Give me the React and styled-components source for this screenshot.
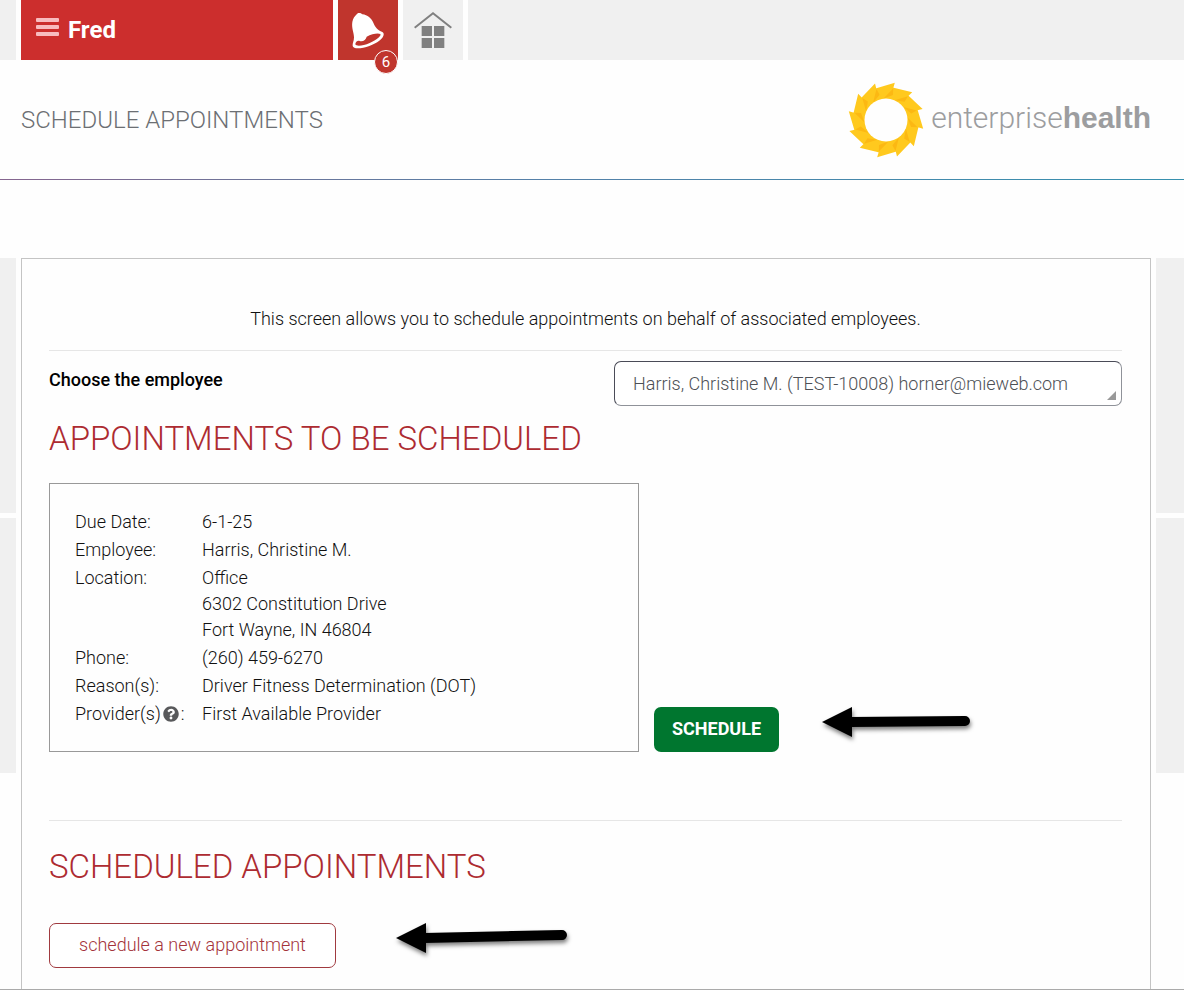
import React, { useState } from "react";
import styled, { createGlobalStyle } from "styled-components";
import { FaQuestionCircle } from "react-icons/fa";

const GlobalStyle = createGlobalStyle`
  * {
    box-sizing: border-box;
  }
  body {
    margin: 0;
    background: #fefefe;
    color: #111;
    font-family: Roboto, "Open Sans", sans-serif;
    font-size: 18px;
    font-weight: 300;
    line-height: 26px;
  }
`;

const Page = styled.div`
  display: flex;
  flex-direction: column;
  min-height: 100vh;
  border-bottom: 1px solid #aaa;
`;

const TopBar = styled.nav`
  display: flex;
  gap: 5px;
  height: 60px;
`;

const BarFill = styled.div`
  background: #f0f0f0;
  flex: ${({ $width }) => ($width ? `0 0 ${$width}` : "1")};
`;

const MenuButton = styled.button`
  display: flex;
  align-items: center;
  gap: 9px;
  flex: 0 1 312px;
  padding: 0 15px;
  border: 0;
  background: #cc2e2d;
  color: #fff;
  font-family: inherit;
  font-size: 24px;
  font-weight: 700;
  cursor: pointer;
`;

const MenuLines = styled.span`
  display: flex;
  flex-direction: column;
  gap: 3px;
  width: 23px;
  margin-bottom: 6px;

  i {
    height: 4px;
    border-radius: 1px;
    background: #f8bcbf;
  }
`;

const IconLink = styled.a`
  position: relative;
  flex: 0 0 60px;
  background: ${({ $active }) => ($active ? "#c0352d" : "#f0f0f0")};

  svg {
    display: block;
  }
`;

const Badge = styled.span`
  position: absolute;
  right: 0;
  bottom: -14px;
  width: 24px;
  height: 24px;
  border: 1px solid #fff;
  border-radius: 50%;
  background: #c0352d;
  color: #fff;
  font-size: 15px;
  font-weight: 400;
  line-height: 23px;
  text-align: center;
`;

const TitleBar = styled.header`
  display: flex;
  align-items: center;
  justify-content: space-between;
  height: 119px;
  padding: 0 33px 0 21px;
`;

const PageTitle = styled.h1`
  margin: 0;
  color: #6c6f73;
  font-size: 24px;
  font-weight: 300;
`;

const Logo = styled.a`
  display: flex;
  align-items: center;
  gap: 7px;
  color: #9c9d9f;
  font-size: 30px;
  text-decoration: none;

  span {
    margin-bottom: 4px;
  }
  b {
    font-family: "Liberation Sans", Arial, sans-serif;
    font-weight: 700;
  }
`;

const Rule = styled.div`
  height: 1px;
  background: linear-gradient(to right, #86658f, #6f7398 20%, #5580a8 45%, #3690ae);
`;

const Body = styled.div`
  display: flex;
  flex: 1;
  gap: 5px;
  margin-top: 78px;
`;

const Gutter = styled.div`
  display: flex;
  flex-direction: column;
  gap: 5px;
  flex: 0 0 ${({ $width }) => $width};

  div {
    height: 255px;
    background: #f0f0f0;
  }
`;

const Panel = styled.main`
  flex: 1;
  min-width: 0;
  padding: 47px 28px 21px 27px;
  border: 1px solid #c4c4c4;
  border-bottom: 0;
`;

const Intro = styled.p`
  margin: 0 0 18px;
  text-align: center;
`;

const Divider = styled.hr`
  height: 1px;
  margin: ${({ $top }) => $top || 0} 0 0;
  border: 0;
  background: #e6e6e6;
`;

const EmployeeRow = styled.div`
  display: flex;
  justify-content: space-between;
  gap: 20px;
  margin-top: 10px;
`;

const Label = styled.label`
  padding-top: 6px;
  color: #000;
  font-weight: 500;
`;

const SelectWrap = styled.div`
  position: relative;
  flex: 0 1 508px;

  svg {
    position: absolute;
    right: 6px;
    bottom: 6px;
    pointer-events: none;
  }
`;

const Select = styled.select`
  appearance: none;
  display: block;
  width: 100%;
  height: 45px;
  padding: 0 18px;
  border: 1px solid;
  border-color: #4a4b57 #8f9299 #8f9299 #4a4b57;
  border-radius: 7px;
  background: #fff;
  color: #4d5055;
  font: inherit;
`;

const SectionTitle = styled.h2`
  margin: ${({ $margin }) => $margin};
  color: #ad2b31;
  font-size: 33px;
  font-weight: 300;
  line-height: 44px;
`;

const Row = styled.div`
  display: flex;
  align-items: flex-end;
`;

const Card = styled.section`
  flex: 0 1 590px;
  padding: 25px 25px 24px;
  border: 1px solid #999;
`;

const Details = styled.dl`
  display: grid;
  grid-template-columns: 127px 1fr;
  row-gap: 2px;
  margin: 0;

  dd {
    margin: 0;
  }
`;

const HelpIcon = styled(FaQuestionCircle)`
  width: 16px;
  height: 16px;
  margin: 0 2px;
  color: #58595b;
  vertical-align: -2px;
`;

const Button = styled.button`
  height: 45px;
  padding: 0 15px 2px;
  border-radius: 7px;
  font: inherit;
  cursor: pointer;
`;

const PrimaryButton = styled(Button)`
  width: 125px;
  margin-left: 15px;
  border: 0;
  background: #00762f;
  color: #fff;
  font-weight: 700;
`;

const OutlineButton = styled(Button)`
  width: 287px;
  border: 1px solid #a03a3f;
  background: #fff;
  color: #a4333a;
`;

const ArrowSvg = styled.svg`
  margin-left: ${({ $space }) => $space};
  overflow: visible;
  filter: drop-shadow(1px 3px 2px rgba(0, 0, 0, 0.5));
`;

const BellIcon = () => (
  <svg width="60" height="60" viewBox="24 0 180 180" aria-hidden="true">
    <path
      fill="#fff"
      d="M79 44C82 38 91 37 97 43C113 45 124 55 130 68C136 82 143 90 157 96C163 99 162 107 157 113C148 125 125 137 100 143C84 146 70 146 68 138C67 130 72 124 72 112C72 98 64 84 67 66C69 54 74 48 79 44Z"
    />
    <path
      fill="#c0352d"
      d="M76 133C76 127 82 121 89 123C99 126 108 119 110 110C126 101 145 98 151 102C155 107 140 120 119 129C100 137 80 141 76 133Z"
    />
  </svg>
);

const HomeIcon = () => (
  <svg width="60" height="60" viewBox="219 0 180 180" aria-hidden="true">
    <path d="M254 83L309 40L364 83" fill="none" stroke="#808080" strokeWidth="6" />
    <path
      fill="#808080"
      d="M275 78h31v30h-31zM312 78h31v30h-31zM275 114h31v30h-31zM312 114h31v30h-31z"
    />
  </svg>
);

const blades = Array.from({ length: 12 }, (_, i) => i * 30);

const SunLogo = () => (
  <svg width="76" height="76" viewBox="-38 -38 76 76" aria-hidden="true">
    {blades.map((angle) => (
      <path
        key={angle}
        transform={`rotate(${angle})`}
        fill="#ffc91e"
        d="M-10.5 -31.5L8.8 -37.2L7 -31L8 -20L-8 -20Z"
      />
    ))}
    {blades.map((angle) => (
      <path
        key={angle}
        transform={`rotate(${angle})`}
        fill="#fcb813"
        d="M7.2 -31.5L-2.5 -21.5L7 -25Z"
      />
    ))}
    <circle r="21.5" fill="#fefefe" />
  </svg>
);

const Arrow = ({ space, length, rise }) => (
  <ArrowSvg $space={space} width={length} height="45" aria-hidden="true">
    <path d="M0 15L30 0V30Z" />
    <path
      d={`M28 15L${length - 5} ${15 - rise}`}
      stroke="#000"
      strokeWidth="10"
      strokeLinecap="round"
    />
  </ArrowSvg>
);

const employees = ["Harris, Christine M. (TEST-10008) horner@mieweb.com"];

const details = [
  ["Due Date:", ["6-1-25"]],
  ["Employee:", ["Harris, Christine M."]],
  ["Location:", ["Office", "6302 Constitution Drive", "Fort Wayne, IN 46804"]],
  ["Phone:", ["(260) 459-6270"]],
  ["Reason(s):", ["Driver Fitness Determination (DOT)"]],
  [<>Provider(s)<HelpIcon />:</>, ["First Available Provider"]],
];

const App = () => {
  const [employee, setEmployee] = useState(employees[0]);

  return (
    <Page>
      <GlobalStyle />
      <TopBar>
        <BarFill $width="16px" />
        <MenuButton>
          <MenuLines>
            <i />
            <i />
            <i />
          </MenuLines>
          Fred
        </MenuButton>
        <IconLink href="#notifications" $active>
          <BellIcon />
          <Badge>6</Badge>
        </IconLink>
        <IconLink href="#home">
          <HomeIcon />
        </IconLink>
        <BarFill />
      </TopBar>
      <TitleBar>
        <PageTitle>SCHEDULE APPOINTMENTS</PageTitle>
        <Logo href="#home">
          <SunLogo />
          <span>
            enterprise<b>health</b>
          </span>
        </Logo>
      </TitleBar>
      <Rule />
      <Body>
        <Gutter $width="16px">
          <div />
          <div />
        </Gutter>
        <Panel>
          <Intro>
            This screen allows you to schedule appointments on behalf of associated employees.
          </Intro>
          <Divider />
          <EmployeeRow>
            <Label htmlFor="employee">Choose the employee</Label>
            <SelectWrap>
              <Select
                id="employee"
                value={employee}
                onChange={(event) => setEmployee(event.target.value)}
              >
                {employees.map((name) => (
                  <option key={name}>{name}</option>
                ))}
              </Select>
              <svg width="9" height="9" aria-hidden="true">
                <path d="M9 0V9H0Z" fill="#999" />
              </svg>
            </SelectWrap>
          </EmployeeRow>
          <SectionTitle $margin="11px 0 22px">APPOINTMENTS TO BE SCHEDULED</SectionTitle>
          <Row>
            <Card>
              <Details>
                {details.map(([term, lines], index) => (
                  <React.Fragment key={index}>
                    <dt>{term}</dt>
                    <dd>
                      {lines.map((line) => (
                        <div key={line}>{line}</div>
                      ))}
                    </dd>
                  </React.Fragment>
                ))}
              </Details>
            </Card>
            <PrimaryButton>SCHEDULE</PrimaryButton>
            <Arrow space="43px" length={148} rise={1} />
          </Row>
          <Divider $top="68px" />
          <SectionTitle $margin="24px 0 34px">SCHEDULED APPOINTMENTS</SectionTitle>
          <Row>
            <OutlineButton>schedule a new appointment</OutlineButton>
            <Arrow space="60px" length={171} rise={3} />
          </Row>
        </Panel>
        <Gutter $width="28px">
          <div />
          <div />
        </Gutter>
      </Body>
    </Page>
  );
};

export default App;
